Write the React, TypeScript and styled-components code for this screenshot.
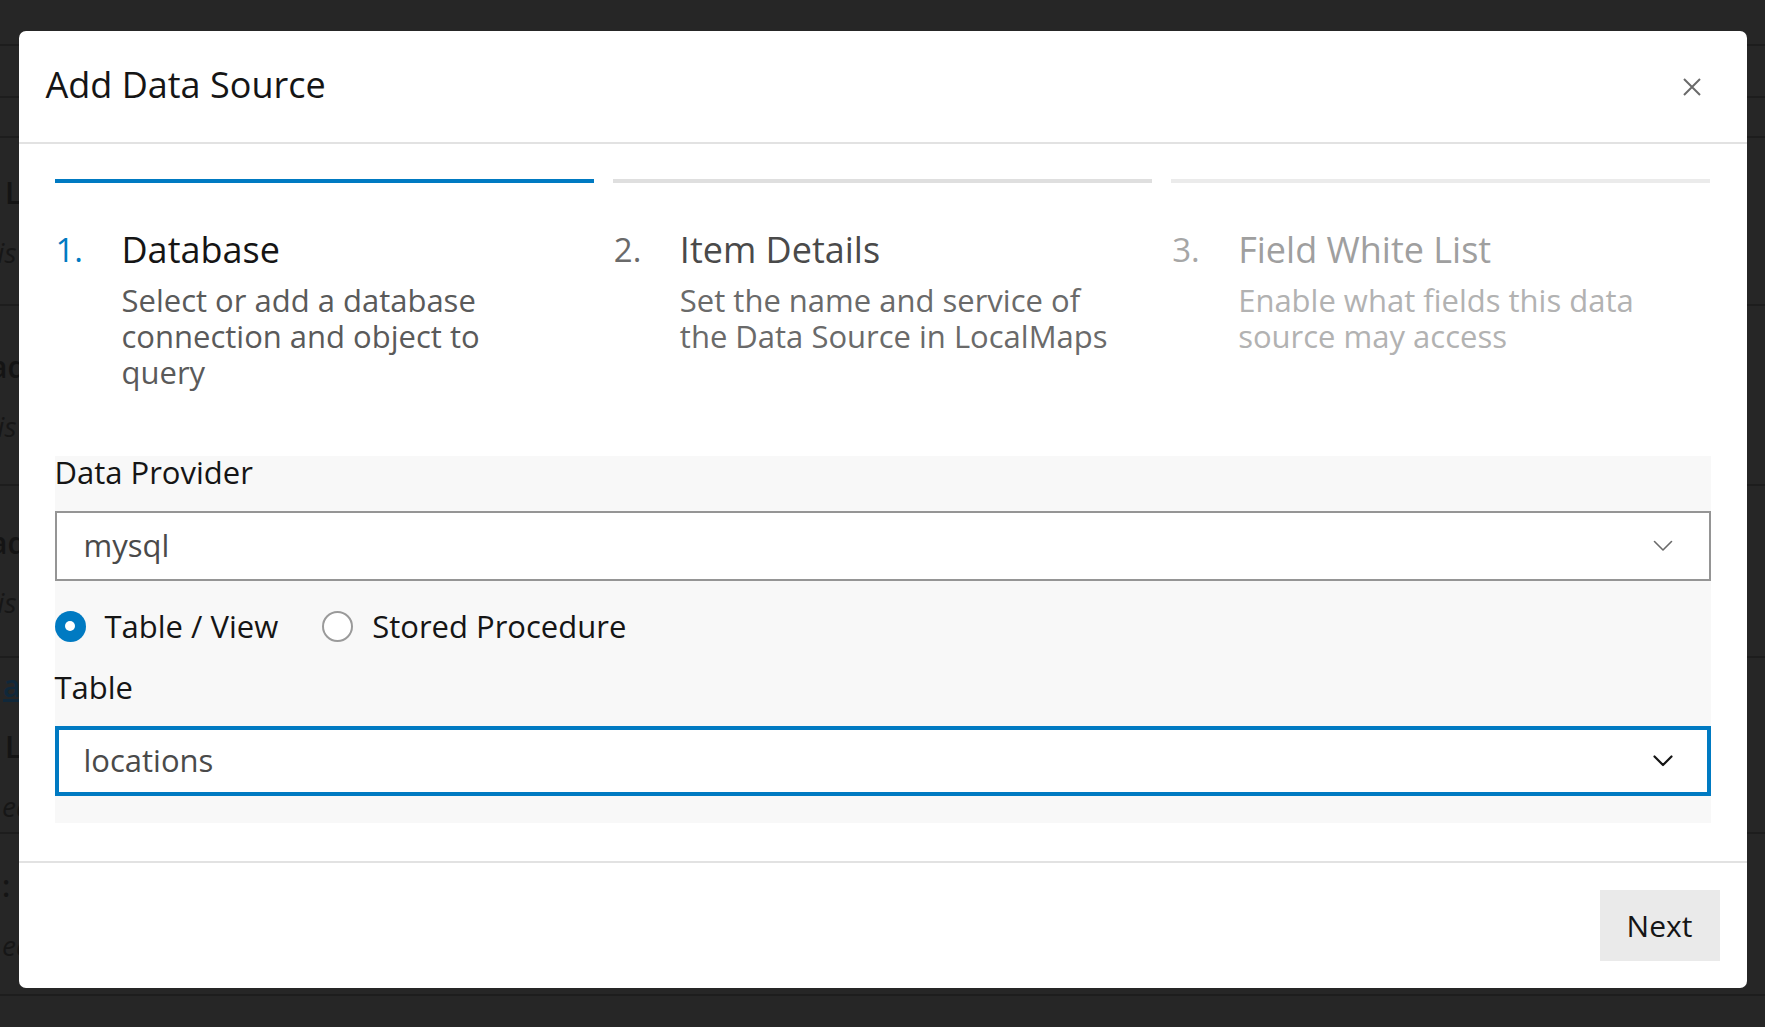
import React from "react";
import styled, { createGlobalStyle } from "styled-components";

const GlobalStyle = createGlobalStyle`
  html, body {
    margin: 0;
    padding: 0;
    background: #262626;
    overflow: hidden;
  }
  body {
    font-family: "Open Sans", "Noto Sans", sans-serif;
    -webkit-font-smoothing: antialiased;
  }
  * { box-sizing: border-box; }
`;

/* ---------- dimmed background page ---------- */

const Page = styled.div`
  position: relative;
  width: 1765px;
  height: 1027px;
  overflow: hidden;
  background: #262626;
  display: flex;
  flex-direction: column;
`;

const BgRow = styled.div<{ $h: number }>`
  height: ${(p) => p.$h}px;
  border-bottom: 2px solid #1d1d1d;
  display: flex;
  flex-direction: column;
  justify-content: center;
  gap: 20px;
  padding-left: 4px;
  flex-shrink: 0;
`;

const BgTitle = styled.div<{ $shift?: number; $link?: boolean }>`
  font-size: 30px;
  font-weight: 600;
  color: ${(p) => (p.$link ? "#10283a" : "#141414")};
  text-decoration: ${(p) => (p.$link ? "underline" : "none")};
  margin-left: ${(p) => p.$shift ?? 0}px;
  white-space: nowrap;
`;

const BgItalic = styled.div<{ $shift?: number }>`
  font-size: 28px;
  font-style: italic;
  color: #161616;
  margin-left: ${(p) => p.$shift ?? 0}px;
  white-space: nowrap;
`;

/* ---------- modal ---------- */

const Overlay = styled.div`
  position: absolute;
  inset: 0;
  display: flex;
  justify-content: center;
  align-items: flex-start;
  padding-top: 31px;
`;

const Modal = styled.div`
  width: 1728px;
  background: #ffffff;
  border-radius: 7px;
  display: flex;
  flex-direction: column;
  overflow: hidden;
`;

const Header = styled.div`
  height: 113px;
  display: flex;
  align-items: center;
  justify-content: space-between;
  padding-left: 27px;
  border-bottom: 2px solid #e2e2e2;
`;

const Title = styled.h2`
  margin: 0;
  font-size: 36px;
  font-weight: 400;
  color: #151515;
  line-height: 44px;
  margin-top: -3px;
`;

const CloseButton = styled.button`
  width: 72px;
  height: 100%;
  margin-right: 19px;
  border: none;
  background: transparent;
  display: flex;
  align-items: center;
  justify-content: center;
  padding: 0;
  margin-top: 1px;
  cursor: pointer;
`;

const Body = styled.div`
  padding: 35px 36px 38px;
  display: flex;
  flex-direction: column;
`;

const Steps = styled.div`
  display: grid;
  grid-template-columns: repeat(3, 1fr);
  column-gap: 19px;
`;

type StepState = "active" | "next" | "future";

const barColor: Record<StepState, string> = {
  active: "#007ac2",
  next: "#dfdfdf",
  future: "#ebebeb",
};
const numColor: Record<StepState, string> = {
  active: "#007ac2",
  next: "#6a6a6a",
  future: "#a6a6a6",
};
const headColor: Record<StepState, string> = {
  active: "#151515",
  next: "#4a4a4a",
  future: "#9f9f9f",
};
const descColor: Record<StepState, string> = {
  active: "#5a5a5a",
  next: "#6a6a6a",
  future: "#b2b2b2",
};

const Step = styled.div<{ $state: StepState }>`
  border-top: 4px solid ${(p) => barColor[p.$state]};
  padding-top: 45px;
  display: grid;
  grid-template-columns: 67px 1fr;
  align-content: start;
`;

const StepNum = styled.div<{ $state: StepState }>`
  font-size: 33px;
  line-height: 44px;
  color: ${(p) => numColor[p.$state]};
  padding-left: 1px;
`;

const StepHead = styled.div<{ $state: StepState }>`
  font-size: 36px;
  line-height: 44px;
  font-weight: 500;
  color: ${(p) => headColor[p.$state]};
`;

const StepDesc = styled.div<{ $state: StepState }>`
  grid-column: 2;
  margin-top: 10px;
  font-size: 31px;
  line-height: 36px;
  color: ${(p) => descColor[p.$state]};
`;

const Form = styled.div`
  margin-top: 66px;
  background: #f8f8f8;
  padding-bottom: 27px;
  display: flex;
  flex-direction: column;
`;

const Label = styled.div<{ $gapTop?: number }>`
  font-size: 31px;
  line-height: 32px;
  color: #151515;
  margin-top: ${(p) => p.$gapTop ?? 0}px;
  margin-bottom: 23px;
`;

const Select = styled.div<{ $focused?: boolean }>`
  height: 70px;
  flex-shrink: 0;
  background: #ffffff;
  border: 2px solid ${(p) => (p.$focused ? "#007ac2" : "#959595")};
  box-shadow: ${(p) => (p.$focused ? "inset 0 0 0 2px #007ac2" : "none")};
  display: flex;
  align-items: center;
  justify-content: space-between;
  padding: 0 36px 0 27px;
`;

const SelectValue = styled.span`
  font-size: 31px;
  color: #4a4a4a;
  margin-top: -2px;
`;

const RadioRow = styled.div`
  display: flex;
  align-items: center;
  margin-top: 27px;
  height: 36px;
  gap: 44px;
`;

const RadioItem = styled.label`
  display: flex;
  align-items: center;
  gap: 19px;
  font-size: 31px;
  color: #151515;
`;

const RadioCircle = styled.span<{ $checked?: boolean }>`
  width: 31px;
  height: 31px;
  border-radius: 50%;
  flex-shrink: 0;
  display: flex;
  align-items: center;
  justify-content: center;
  background: ${(p) => (p.$checked ? "#007ac2" : "#ffffff")};
  border: ${(p) => (p.$checked ? "none" : "2px solid #9a9a9a")};
  &::after {
    content: "";
    display: ${(p) => (p.$checked ? "block" : "none")};
    width: 10px;
    height: 10px;
    border-radius: 50%;
    background: #ffffff;
  }
`;

const Footer = styled.div`
  border-top: 2px solid #e2e2e2;
  padding: 27px;
  display: flex;
  justify-content: flex-end;
`;

const NextButton = styled.button`
  width: 120px;
  height: 71px;
  border: none;
  background: #eaeaea;
  font-family: "Open Sans", "Noto Sans", sans-serif;
  font-size: 30px;
  color: #151515;
  padding: 0;
  cursor: pointer;
`;

const Chevron = ({ dark }: { dark?: boolean }) => (
  <svg width="20" height="12" viewBox="0 0 20 12" fill="none">
    <path
      d="M1.5 1.5 L10 10 L18.5 1.5"
      stroke={dark ? "#151515" : "#6a6a6a"}
      strokeWidth={dark ? 2.2 : 1.6}
      strokeLinecap="round"
      strokeLinejoin="round"
    />
  </svg>
);

const CloseIcon = () => (
  <svg width="20" height="20" viewBox="0 0 20 20" fill="none">
    <path d="M2 2 L18 18 M18 2 L2 18" stroke="#6a6a6a" strokeWidth="2" />
  </svg>
);

const steps: { n: string; title: string; lines: string[]; state: StepState }[] = [
  {
    n: "1.",
    title: "Database",
    lines: ["Select or add a database", "connection and object to", "query"],
    state: "active",
  },
  {
    n: "2.",
    title: "Item Details",
    lines: ["Set the name and service of", "the Data Source in LocalMaps"],
    state: "next",
  },
  {
    n: "3.",
    title: "Field White List",
    lines: ["Enable what fields this data", "source may access"],
    state: "future",
  },
];

export default function App() {
  return (
    <Page>
      <GlobalStyle />
      <BgRow $h={46} />
      <BgRow $h={52} />
      <BgRow $h={40} />
      <BgRow $h={168}>
        <BgTitle $shift={1}>LocalMaps</BgTitle>
        <BgItalic $shift={-32}>this item</BgItalic>
      </BgRow>
      <BgRow $h={180}>
        <BgTitle $shift={-14}>ad</BgTitle>
        <BgItalic $shift={-32}>this item</BgItalic>
      </BgRow>
      <BgRow $h={172}>
        <BgTitle $shift={-14}>ad</BgTitle>
        <BgItalic $shift={-32}>this item</BgItalic>
      </BgRow>
      <BgRow $h={176}>
        <BgTitle $shift={-1} $link>
          a
        </BgTitle>
        <BgTitle $shift={1}>LocalMaps</BgTitle>
        <BgItalic $shift={-2}>ed</BgItalic>
      </BgRow>
      <BgRow $h={162}>
        <BgTitle $shift={-2}>: I</BgTitle>
        <BgItalic $shift={-2}>ed in to LocalMaps to access this Data Source</BgItalic>
      </BgRow>

      <Overlay>
        <Modal role="dialog" aria-label="Add Data Source">
          <Header>
            <Title>Add Data Source</Title>
            <CloseButton aria-label="Close">
              <CloseIcon />
            </CloseButton>
          </Header>
          <Body>
            <Steps>
              {steps.map((s) => (
                <Step key={s.n} $state={s.state}>
                  <StepNum $state={s.state}>{s.n}</StepNum>
                  <StepHead $state={s.state}>{s.title}</StepHead>
                  <StepDesc $state={s.state}>
                    {s.lines.map((l, i) => (
                      <React.Fragment key={i}>
                        {l}
                        {i < s.lines.length - 1 && <br />}
                      </React.Fragment>
                    ))}
                  </StepDesc>
                </Step>
              ))}
            </Steps>
            <Form>
              <Label>Data Provider</Label>
              <Select>
                <SelectValue>mysql</SelectValue>
                <Chevron />
              </Select>
              <RadioRow>
                <RadioItem>
                  <RadioCircle $checked />
                  Table / View
                </RadioItem>
                <RadioItem>
                  <RadioCircle />
                  Stored Procedure
                </RadioItem>
              </RadioRow>
              <Label $gapTop={27}>Table</Label>
              <Select $focused>
                <SelectValue>locations</SelectValue>
                <Chevron dark />
              </Select>
            </Form>
          </Body>
          <Footer>
            <NextButton>Next</NextButton>
          </Footer>
        </Modal>
      </Overlay>
    </Page>
  );
}
